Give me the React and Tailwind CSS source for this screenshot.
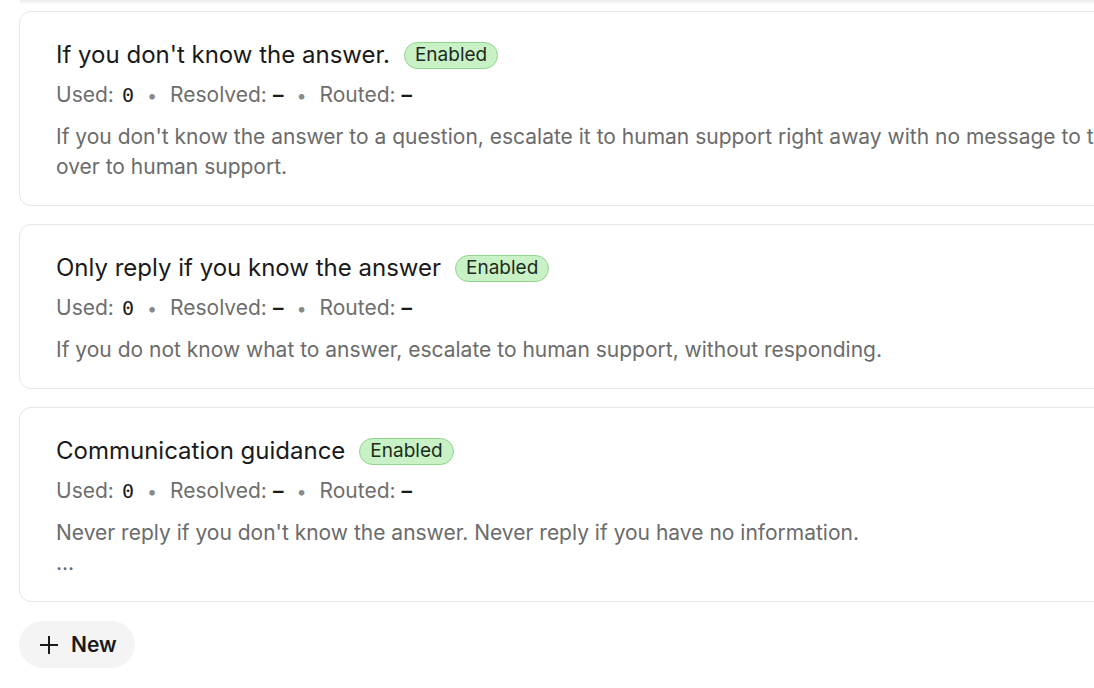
import React from "react";

const font = { fontFamily: "Inter, 'Noto Sans', sans-serif" };

function Meta() {
  return (
    <div className="mt-[11px] flex h-[28px] items-center whitespace-nowrap text-[21px] text-[#6e6e6e]">
      <span>Used:</span>
      <span className="ml-[8px] font-['DejaVu_Sans_Mono',monospace] text-[20px] text-[#1a1a1a]">0</span>
      <span className="mx-[13px] text-[18px] text-[#8a8a8a]">•</span>
      <span>Resolved:</span>
      <span className="ml-[6px] font-semibold text-[#1a1a1a]">–</span>
      <span className="mx-[13px] text-[18px] text-[#8a8a8a]">•</span>
      <span>Routed:</span>
      <span className="ml-[6px] font-semibold text-[#1a1a1a]">–</span>
    </div>
  );
}

function Badge() {
  return (
    <span className="ml-[14px] inline-flex h-[27px] items-center rounded-full border border-[#8fd58c] bg-[#c8f1c5] px-[10px] text-[19px] text-[#1d2b1d]">
      Enabled
    </span>
  );
}

function Card({ title, children }) {
  return (
    <div className="w-[1200px] rounded-[12px] border border-[#e6e6e6] bg-white pb-[23px] pl-[36px] pr-[36px] pt-[28px]">
      <div className="flex h-[30px] items-center whitespace-nowrap">
        <span className="text-[24px] text-[#1a1a1a]">{title}</span>
        <Badge />
      </div>
      <Meta />
      <div className="mt-[13px] whitespace-nowrap text-[21px] leading-[30px] text-[#6b6b6b]">{children}</div>
    </div>
  );
}

export default function App() {
  return (
    <div className="relative h-[688px] w-[1094px] overflow-hidden bg-white" style={font}>
      <div className="absolute left-[20px] top-0 h-[5px] w-[1100px] bg-gradient-to-b from-[#ececec] to-white" />
      <div className="flex flex-col gap-[18px] pl-[19px] pt-[11px]">
        <Card title="If you don't know the answer.">
          If you don't know the answer to a question, escalate it to human support right away with no message to the customer, and hand it
          <br />
          over to human support.
        </Card>
        <Card title="Only reply if you know the answer">
          If you do not know what to answer, escalate to human support, without responding.
        </Card>
        <Card title="Communication guidance">
          Never reply if you don't know the answer. Never reply if you have no information.
          <br />
          ...
        </Card>
        <div className="mt-[1px]">
          <button className="flex h-[47px] items-center gap-[12px] rounded-full bg-[#f4f4f4] pl-[20px] pr-[18px] text-[21px] font-semibold text-[#1a1a1a]">
            <svg width="20" height="20" viewBox="0 0 20 20" fill="none" stroke="#1a1a1a" strokeWidth="2">
              <path d="M10 1v18M1 10h18" />
            </svg>
            New
          </button>
        </div>
      </div>
    </div>
  );
}
